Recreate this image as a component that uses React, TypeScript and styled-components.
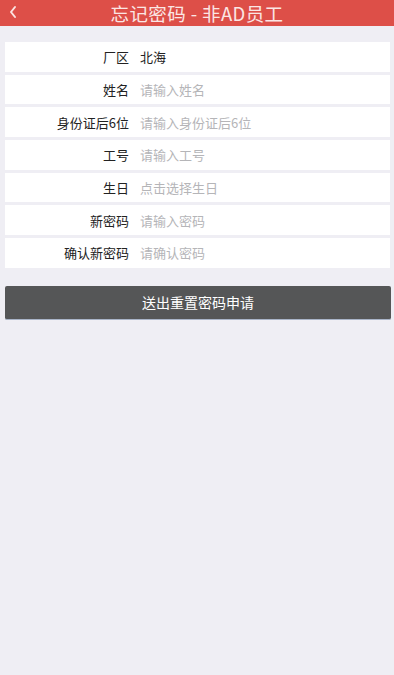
import styled, { createGlobalStyle } from 'styled-components'

const GlobalStyle = createGlobalStyle`
  html, body {
    margin: 0;
    padding: 0;
    background: #efeef4;
    font-family: "Noto Sans CJK SC", "Noto Sans", sans-serif;
  }
`

const fields = [
  { label: '厂区', value: '北海' },
  { label: '姓名', placeholder: '请输入姓名' },
  { label: '身份证后6位', placeholder: '请输入身份证后6位' },
  { label: '工号', placeholder: '请输入工号' },
  { label: '生日', placeholder: '点击选择生日' },
  { label: '新密码', placeholder: '请输入密码' },
  { label: '确认新密码', placeholder: '请确认密码' },
]

export default function App() {
  return (
    <Page>
      <GlobalStyle />
      <Header>
        <Back>
          <svg width="10" height="14" viewBox="0 0 10 14">
            <path d="M7 2 L3 7 L7 12" fill="none" stroke="#fbe3e1" strokeWidth="2" strokeLinecap="round" strokeLinejoin="round" />
          </svg>
        </Back>
        <Title>忘记密码 - 非AD员工</Title>
      </Header>

      <Form>
        {fields.map((f) => (
          <Row key={f.label}>
            <Label>{f.label}</Label>
            <Value $muted={!f.value}>{f.value ?? f.placeholder}</Value>
          </Row>
        ))}
      </Form>

      <Submit>送出重置密码申请</Submit>
    </Page>
  )
}

const Page = styled.div`
  min-height: 675px;
  background: #efeef4;
`

const Header = styled.div`
  position: relative;
  height: 26px;
  background: #dd4f48;
  display: flex;
  align-items: center;
  justify-content: center;
  overflow: hidden;
`

const Back = styled.div`
  position: absolute;
  left: 8px;
  top: 5px;
  display: flex;
`

const Title = styled.div`
  color: #fbe6e4;
  font-size: 18.5px;
  line-height: 26px;
  letter-spacing: 0.4px;
`

const Form = styled.div`
  display: flex;
  flex-direction: column;
  gap: 3.2px;
  padding: 16px 4px 0 5px;
`

const Row = styled.div`
  height: 29.5px;
  background: #fff;
  display: flex;
  align-items: center;
`

const Label = styled.div`
  width: 124px;
  text-align: right;
  font-size: 13px;
  color: #222;
`

const Value = styled.div<{ $muted: boolean }>`
  margin-left: 11px;
  font-size: 13px;
  color: ${({ $muted }) => ($muted ? '#b5b5b8' : '#222')};
`

const Submit = styled.div`
  margin: 18px 3px 0 5px;
  height: 33px;
  background: #555657;
  border-bottom: 1px solid #a9b4c8;
  border-radius: 2px;
  color: #fff;
  font-size: 14px;
  display: flex;
  align-items: center;
  justify-content: center;
`
